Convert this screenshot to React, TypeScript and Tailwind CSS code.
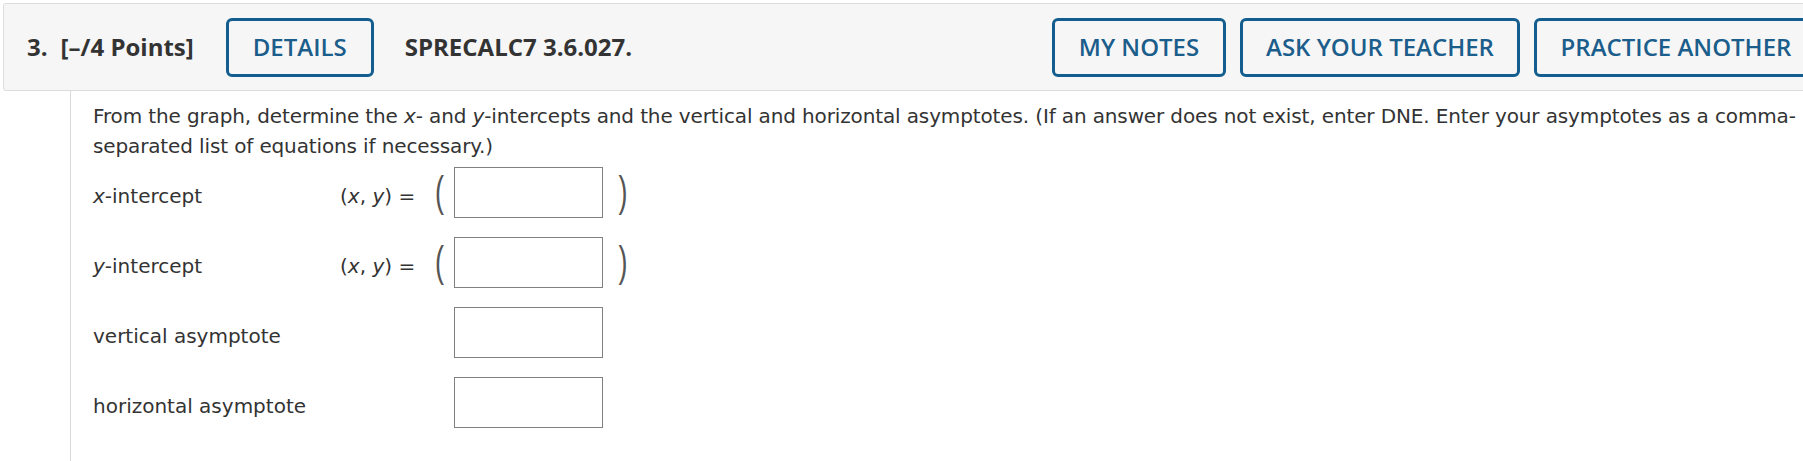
const btn =
  "flex h-[59px] shrink-0 items-center justify-center rounded-[6px] border-[3px] border-[#135e8e] bg-transparent text-[24px] font-semibold text-[#1b5d8b]"

function Paren({ side }: { side: "(" | ")" }) {
  return (
    <span className="inline-block origin-center scale-y-[1.6] font-['Liberation_Sans',sans-serif] text-[27px] leading-none font-light text-[#555]">
      {side}
    </span>
  )
}

function Row({
  label,
  point,
}: {
  label: React.ReactNode
  point?: boolean
}) {
  return (
    <div className="flex h-[51px] items-center">
      <div className="mt-[6px] w-[247px] shrink-0">{label}</div>
      <div className="mt-[6px] w-[90px] shrink-0">
        {point && (
          <>
            (<i>x</i>, <i>y</i>) =
          </>
        )}
      </div>
      <div className="flex w-[24px] shrink-0 justify-start pl-[5px]">
        {point && <Paren side="(" />}
      </div>
      <div className="h-[51px] w-[149px] shrink-0 border border-[#808080] bg-white" />
      <div className="flex w-[40px] shrink-0 justify-center">
        {point && <Paren side=")" />}
      </div>
    </div>
  )
}

export default function App() {
  return (
    <div className="h-[461px] w-[1803px] overflow-hidden bg-white">
      <div className="pl-[3px] pt-[3px]">
        <header className="flex h-[88px] w-[1834px] items-center rounded-[3px] border border-[#dcdcdc] bg-[#f6f6f6] pl-[23px] pr-[18px] font-['Open_Sans',sans-serif] text-[#333]">
          <div className="flex shrink-0 items-center text-[24px] font-bold">
            <span>3.</span>
            <span className="ml-[13px]">[–/4 Points]</span>
          </div>
          <button className={`${btn} ml-[32px] w-[148px]`}>DETAILS</button>
          <div className="ml-[31px] shrink-0 text-[24px] font-bold">
            SPRECALC7 3.6.027.
          </div>
          <div className="ml-auto flex gap-[14px]">
            <button className={`${btn} w-[174px]`}>MY NOTES</button>
            <button className={`${btn} w-[280px]`}>ASK YOUR TEACHER</button>
            <button className={`${btn} w-[284px]`}>PRACTICE ANOTHER</button>
          </div>
        </header>
      </div>

      <div className="ml-[70px] h-[370px] border-l border-[#d8d8d8] pl-[22px] font-['DejaVu_Sans',sans-serif] text-[20px] text-[#333]">
        <p className="w-[1745px] pt-[10px] leading-[30px] tracking-[-0.13px]">
          From the graph, determine the <i>x</i>- and <i>y</i>-intercepts and
          the vertical and horizontal asymptotes. (If an answer does not exist,
          enter DNE. Enter your asymptotes as a comma-separated list of
          equations if necessary.)
        </p>

        <div className="mt-[6px] flex flex-col gap-[19px]">
          <Row
            label={
              <>
                <i>x</i>-intercept
              </>
            }
            point
          />
          <Row
            label={
              <>
                <i>y</i>-intercept
              </>
            }
            point
          />
          <Row label="vertical asymptote" />
          <Row label="horizontal asymptote" />
        </div>
      </div>
    </div>
  )
}
